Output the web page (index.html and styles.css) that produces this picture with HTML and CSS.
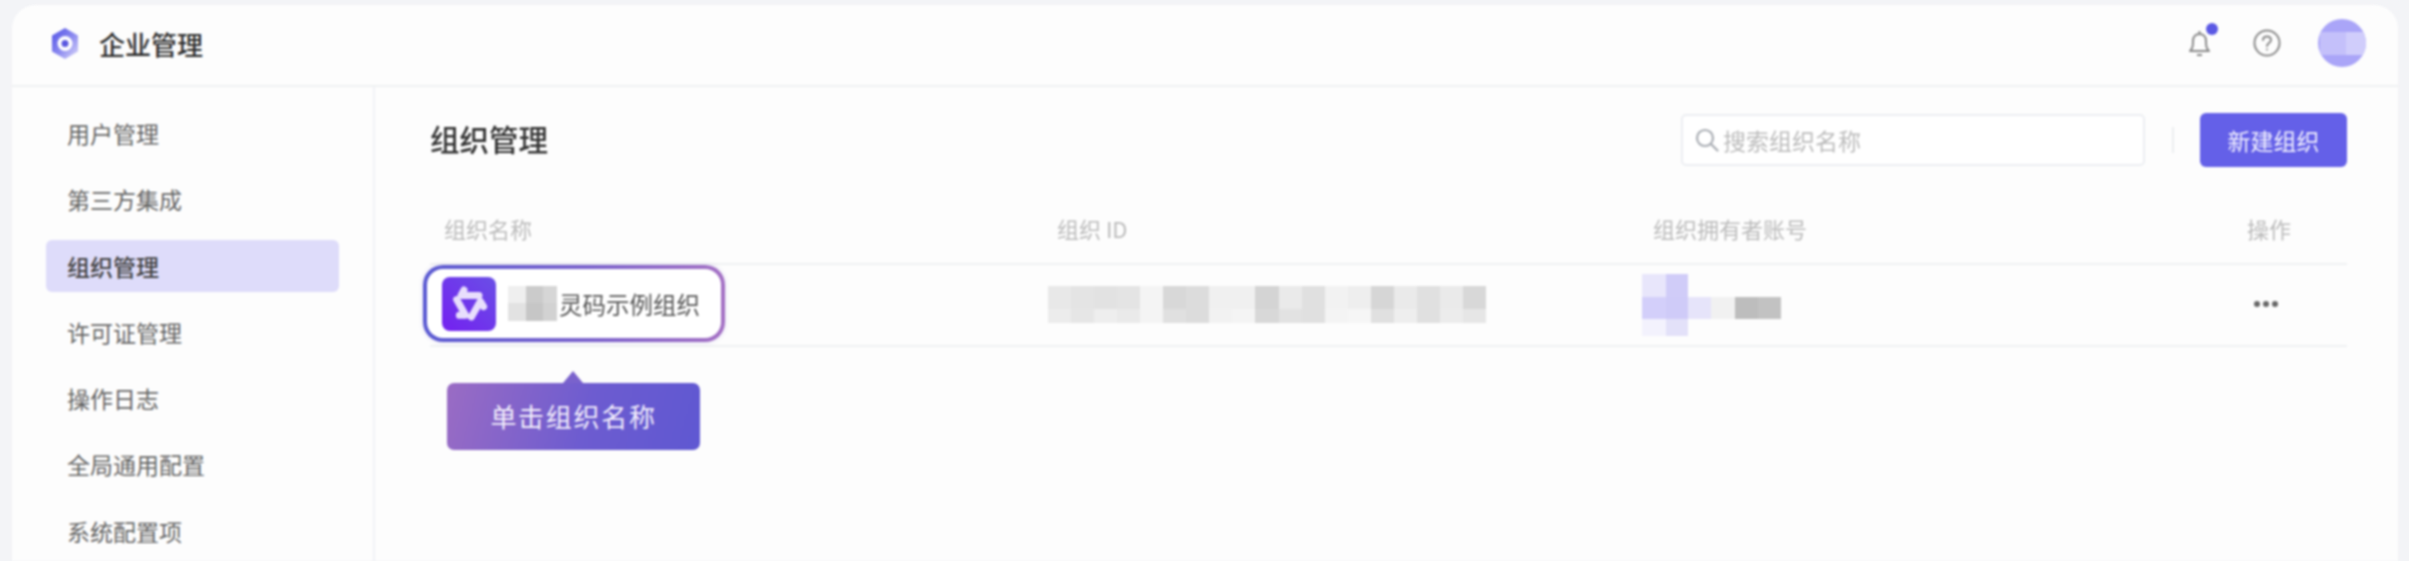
FILE: index.html
```html
<!DOCTYPE html>
<html lang="zh-CN">
<head>
    <meta charset="UTF-8">
    <meta name="viewport" content="width=device-width, initial-scale=1.0">
    <title>企业管理 - 组织管理</title>
    <link rel="stylesheet" href="styles.css">
</head>
<body>
    <div class="app">
        <header class="topbar">
            <div class="brand">
                <svg class="brand-logo" width="30" height="33" viewBox="0 0 30 33">
                    <defs>
                        <linearGradient id="hexFill" x1="0" y1="0" x2="1" y2="1">
                            <stop offset="0" stop-color="#4f50e6"/>
                            <stop offset="0.55" stop-color="#8f8df0"/>
                            <stop offset="1" stop-color="#dedcfa"/>
                        </linearGradient>
                    </defs>
                    <path d="M15 1 L28 8.5 V24.5 L15 32 L2 24.5 V8.5 Z" fill="url(#hexFill)"/>
                    <circle cx="15" cy="16.5" r="7.5" fill="#fff"/>
                    <circle cx="15" cy="16.5" r="3.5" fill="#5a58e0"/>
                </svg>
                <span class="brand-name">企业管理</span>
            </div>
            <div class="topbar-tools">
                <div class="bell">
                    <svg width="24" height="28" viewBox="0 0 24 28" fill="none" stroke="#8a8a8a" stroke-width="2">
                        <path d="M2 22 C5.500 19 5 15 5 12 C5 7.500 8 5 11.500 5 C15 5 18 7.500 18 12 C18 15 17.500 19 21 22 Z" stroke-linejoin="round"/>
                        <path d="M11.500 2 V5 M9 26 H14"/>
                    </svg>
                    <span class="bell-dot"></span>
                </div>
                <svg class="help" width="28" height="28" viewBox="0 0 28 28" fill="none" stroke="#8a8a8a" stroke-width="2">
                    <circle cx="14" cy="14" r="12.500"/>
                    <path d="M10 11 C10 8.500 12 7.500 14 7.500 C16.500 7.500 18 9 18 11 C18 14 14 14 14 17" stroke-linecap="round"/>
                    <circle cx="14" cy="20.500" r="1" fill="#8a8a8a" stroke="none"/>
                </svg>
                <div class="avatar">
                    <span class="avatar-cell"></span>
                    <span class="avatar-cell light"></span>
                </div>
            </div>
        </header>

        <div class="layout">
            <nav class="sidebar">
                <a class="nav-item">用户管理</a>
                <a class="nav-item">第三方集成</a>
                <a class="nav-item active">组织管理</a>
                <a class="nav-item">许可证管理</a>
                <a class="nav-item">操作日志</a>
                <a class="nav-item">全局通用配置</a>
                <a class="nav-item">系统配置项</a>
            </nav>

            <main class="content">
                <div class="toolbar">
                    <h1 class="page-title">组织管理</h1>
                    <div class="toolbar-actions">
                        <div class="search">
                            <svg width="24" height="24" viewBox="0 0 24 24" fill="none" stroke="#a9adb3" stroke-width="2.200">
                                <circle cx="10" cy="10" r="8"/>
                                <path d="M16 16 L22.500 22.500" stroke-linecap="round"/>
                            </svg>
                            <span class="search-text">搜索组织名称</span>
                        </div>
                        <span class="toolbar-divider"></span>
                        <button class="primary-btn">新建组织</button>
                    </div>
                </div>

                <div class="table-row table-head">
                    <div>组织名称</div>
                    <div>组织 ID</div>
                    <div>组织拥有者账号</div>
                    <div>操作</div>
                </div>

                <div class="table-row table-body">
                    <div class="name-cell">
                        <div class="org-chip">
                            <svg class="org-icon" width="54" height="54" viewBox="0 0 54 54">
                                <defs>
                                    <linearGradient id="orgFill" x1="1" y1="0" x2="0" y2="1">
                                        <stop offset="0" stop-color="#6a4fe6"/>
                                        <stop offset="1" stop-color="#7420f0"/>
                                    </linearGradient>
                                </defs>
                                <rect width="54" height="54" rx="8" fill="url(#orgFill)"/>
                                <g fill="none" stroke="#e8defc" stroke-width="7" stroke-linecap="round" stroke-linejoin="round">
                                    <path d="M22 13 L19 18.500 H37"/>
                                    <path d="M22 13 L19 18.500 H37" transform="rotate(120 27 27)"/>
                                    <path d="M22 13 L19 18.500 H37" transform="rotate(240 27 27)"/>
                                </g>
                            </svg>
                            <svg class="mosaic-name" width="49" height="35" viewBox="0 0 49 35" shape-rendering="crispEdges">
                                <rect x="0" y="0" width="18" height="17" fill="#efefef"/>
                                <rect x="18" y="0" width="17" height="17" fill="#cbcbcb"/>
                                <rect x="35" y="0" width="14" height="17" fill="#d6d6d6"/>
                                <rect x="0" y="17" width="18" height="18" fill="#e2e2e2"/>
                                <rect x="18" y="17" width="17" height="18" fill="#c6c6c6"/>
                                <rect x="35" y="17" width="14" height="18" fill="#d2d2d2"/>
                            </svg>
                            <span class="org-name">灵码示例组织</span>
                        </div>
                        <div class="tip">单击组织名称</div>
                    </div>
                    <div class="id-cell">
                        <svg width="438" height="37" viewBox="0 0 19 2" preserveAspectRatio="none" shape-rendering="crispEdges">
                            <rect x="0" y="0" width="1" height="1.250" fill="#e8e8e8"/>
                            <rect x="1" y="0" width="1" height="1.250" fill="#e4e4e4"/>
                            <rect x="2" y="0" width="1" height="1.250" fill="#e2e2e2"/>
                            <rect x="3" y="0" width="1" height="1.250" fill="#e4e4e4"/>
                            <rect x="4" y="0" width="1" height="1.250" fill="#f4f4f4"/>
                            <rect x="5" y="0" width="1" height="1.250" fill="#d8d8d8"/>
                            <rect x="6" y="0" width="1" height="1.250" fill="#dcdcdc"/>
                            <rect x="7" y="0" width="1" height="1.250" fill="#f0f0f0"/>
                            <rect x="8" y="0" width="1" height="1.250" fill="#f0f0f0"/>
                            <rect x="9" y="0" width="1" height="1.250" fill="#d4d4d4"/>
                            <rect x="10" y="0" width="1" height="1.250" fill="#eaeaea"/>
                            <rect x="11" y="0" width="1" height="1.250" fill="#e0e0e0"/>
                            <rect x="12" y="0" width="1" height="1.250" fill="#f2f2f2"/>
                            <rect x="13" y="0" width="1" height="1.250" fill="#eeeeee"/>
                            <rect x="14" y="0" width="1" height="1.250" fill="#d6d6d6"/>
                            <rect x="15" y="0" width="1" height="1.250" fill="#eaeaea"/>
                            <rect x="16" y="0" width="1" height="1.250" fill="#e0e0e0"/>
                            <rect x="17" y="0" width="1" height="1.250" fill="#eaeaea"/>
                            <rect x="18" y="0" width="1" height="1.250" fill="#d8d8d8"/>
                            <rect x="0" y="1.250" width="1" height="0.750" fill="#ececec"/>
                            <rect x="1" y="1.250" width="1" height="0.750" fill="#e6e6e6"/>
                            <rect x="2" y="1.250" width="1" height="0.750" fill="#eeeeee"/>
                            <rect x="3" y="1.250" width="1" height="0.750" fill="#eaeaea"/>
                            <rect x="4" y="1.250" width="1" height="0.750" fill="#f4f4f4"/>
                            <rect x="5" y="1.250" width="1" height="0.750" fill="#e0e0e0"/>
                            <rect x="6" y="1.250" width="1" height="0.750" fill="#dcdcdc"/>
                            <rect x="7" y="1.250" width="1" height="0.750" fill="#f2f2f2"/>
                            <rect x="8" y="1.250" width="1" height="0.750" fill="#f4f4f4"/>
                            <rect x="9" y="1.250" width="1" height="0.750" fill="#d8d8d8"/>
                            <rect x="10" y="1.250" width="1" height="0.750" fill="#e2e2e2"/>
                            <rect x="11" y="1.250" width="1" height="0.750" fill="#e0e0e0"/>
                            <rect x="12" y="1.250" width="1" height="0.750" fill="#f4f4f4"/>
                            <rect x="13" y="1.250" width="1" height="0.750" fill="#f6f6f6"/>
                            <rect x="14" y="1.250" width="1" height="0.750" fill="#e0e0e0"/>
                            <rect x="15" y="1.250" width="1" height="0.750" fill="#eeeeee"/>
                            <rect x="16" y="1.250" width="1" height="0.750" fill="#e0e0e0"/>
                            <rect x="17" y="1.250" width="1" height="0.750" fill="#ececec"/>
                            <rect x="18" y="1.250" width="1" height="0.750" fill="#e6e6e6"/>
                        </svg>
                    </div>
                    <div class="owner-cell">
                        <svg width="139" height="62" viewBox="0 0 139 62" shape-rendering="crispEdges">
                            <rect x="0" y="0" width="24" height="23" fill="#e8e6fb"/>
                            <rect x="24" y="0" width="22" height="23" fill="#d0ccf8"/>
                            <rect x="0" y="23" width="24" height="22" fill="#d3cffa"/>
                            <rect x="24" y="23" width="22" height="22" fill="#cfcbf8"/>
                            <rect x="46" y="23" width="23" height="22" fill="#e6e4fa"/>
                            <rect x="69" y="23" width="24" height="22" fill="#f1f1f1"/>
                            <rect x="93" y="23" width="23" height="22" fill="#bdbdbd"/>
                            <rect x="116" y="23" width="23" height="22" fill="#c2c2c2"/>
                            <rect x="0" y="45" width="24" height="17" fill="#f3f2fd"/>
                            <rect x="24" y="45" width="22" height="17" fill="#e3e1f9"/>
                        </svg>
                    </div>
                    <div class="action-cell">
                        <span class="more-dot"></span>
                        <span class="more-dot"></span>
                        <span class="more-dot"></span>
                    </div>
                </div>
            </main>
        </div>
    </div>
</body>
</html>
```

FILE: styles.css
```css
:root {
    --page-bg: #f3f4f7;
    --card-bg: #fdfdfd;
    --line: #eff1f2;
    --primary: #6460e8;
    --text-main: #333;
    --text-menu: #666;
    --text-muted: #bbb;
}

* {
    box-sizing: border-box;
}

html, body {
    height: 100%;
}

body {
    font-family: "Noto Sans CJK SC", "Noto Sans", sans-serif;
    background: var(--page-bg);
    margin: 0;
    padding: 5px 11px 0 12px;
    overflow: hidden;
}

.app {
    height: 100%;
    display: flex;
    flex-direction: column;
    background: var(--card-bg);
    border-radius: 24px 24px 0 0;
    filter: blur(0.8px);
}

/* top bar */
.topbar {
    height: 82px;
    flex-shrink: 0;
    display: flex;
    align-items: center;
    justify-content: space-between;
    padding: 0 32px 4px 38px;
    border-bottom: 2px solid var(--line);
}

.brand {
    display: flex;
    align-items: center;
    gap: 19px;
}

.brand-name {
    font-size: 26px;
    font-weight: 500;
    color: #2e2e2e;
}

.topbar-tools {
    display: flex;
    align-items: center;
}

.bell {
    position: relative;
    width: 24px;
    height: 28px;
    margin-right: 41px;
}

.bell-dot {
    position: absolute;
    top: -6px;
    right: -6px;
    width: 12px;
    height: 12px;
    border-radius: 50%;
    background: #5a58e4;
}

.help {
    margin-right: 37px;
}

.avatar {
    width: 48px;
    height: 48px;
    border-radius: 50%;
    background: #aaa5f8;
    display: flex;
    align-items: center;
    justify-content: flex-end;
    overflow: hidden;
}

.avatar-cell {
    width: 26px;
    height: 23px;
    background: #c4c0fa;
}

.avatar-cell.light {
    width: 20px;
    background: #d0cdfb;
}

/* sidebar */
.layout {
    flex: 1;
    display: flex;
    min-height: 0;
}

.sidebar {
    width: 363px;
    padding: 20px 0 0 34px;
    border-right: 2px solid #f1f2f6;
    display: flex;
    flex-direction: column;
    gap: 14.300px;
    flex-shrink: 0;
    overflow: hidden;
}

.nav-item {
    width: 293px;
    height: 52px;
    line-height: 52px;
    padding-left: 21px;
    border-radius: 6px;
    font-size: 23px;
    color: var(--text-menu);
    flex-shrink: 0;
}

.nav-item.active {
    background: #dedcfa;
    color: #444;
    font-weight: 500;
}

/* main */
.content {
    flex: 1;
    padding: 26px 51px 0 55px;
}

.toolbar {
    display: flex;
    align-items: center;
    justify-content: space-between;
    height: 54px;
}

.page-title {
    margin: 0 0 5px;
    font-size: 29.500px;
    font-weight: 500;
    color: var(--text-main);
}

.toolbar-actions {
    display: flex;
    align-items: center;
}

.search {
    width: 464px;
    height: 52px;
    display: flex;
    align-items: center;
    gap: 4px;
    padding-left: 12px;
    border: 2px solid #eceef2;
    border-radius: 5px;
    background: #fff;
}

.search-text {
    font-size: 23px;
    color: var(--text-muted);
}

.toolbar-divider {
    width: 2px;
    height: 26px;
    margin: 0 26px 0 27px;
    background: #eceef0;
}

.primary-btn {
    width: 147px;
    height: 54px;
    border: none;
    border-radius: 6px;
    background: var(--primary);
    color: #f4f3ff;
    font-family: inherit;
    font-size: 23px;
}

/* table */
.table-row {
    display: grid;
    grid-template-columns: 613px 596px 594px 1fr;
    padding-left: 14px;
    border-bottom: 2px solid var(--line);
}

.table-head {
    height: 98px;
    padding-top: 26px;
    align-items: center;
    font-size: 22px;
    color: var(--text-muted);
}

.table-body {
    height: 82px;
    align-items: center;
}

.name-cell {
    position: relative;
    align-self: start;
}

.org-chip {
    width: 302px;
    height: 77px;
    margin-left: -21px;
    display: flex;
    align-items: center;
    padding: 0 15px;
    border: 4px solid transparent;
    border-radius: 20px;
    background: linear-gradient(#fff, #fff) padding-box,
        linear-gradient(90deg, #5a5ad2 0%, #7a62cc 55%, #a470c4 100%) border-box;
    box-shadow: 0 0 4px rgba(120, 100, 210, 0.25);
}

.org-icon {
    flex-shrink: 0;
}

.mosaic-name {
    margin-left: 12px;
    flex-shrink: 0;
}

.org-name {
    margin-left: 2px;
    font-size: 23.500px;
    white-space: nowrap;
    color: #555;
}

/* tooltip */
.tip {
    position: absolute;
    top: 118px;
    left: 3px;
    width: 253px;
    height: 67px;
    line-height: 66px;
    text-align: center;
    border-radius: 7px;
    font-size: 26px;
    letter-spacing: 1.700px;
    color: #f3effc;
    background: linear-gradient(105deg, #9a6cc4 0%, #6d5cd0 55%, #5f58d2 100%);
}

.tip::before {
    content: "";
    position: absolute;
    top: -12px;
    left: 116px;
    border-left: 10px solid transparent;
    border-right: 10px solid transparent;
    border-bottom: 12px solid #7a62cc;
}

.id-cell {
    margin-left: -9px;
    height: 37px;
    margin-top: -2px;
}

.id-cell svg,
.owner-cell svg {
    display: block;
}

.owner-cell {
    margin-left: -11px;
}

.action-cell {
    display: flex;
    gap: 3px;
    padding-left: 7px;
    margin-top: -2px;
}

.more-dot {
    width: 6px;
    height: 6px;
    border-radius: 50%;
    background: #666;
}
```
